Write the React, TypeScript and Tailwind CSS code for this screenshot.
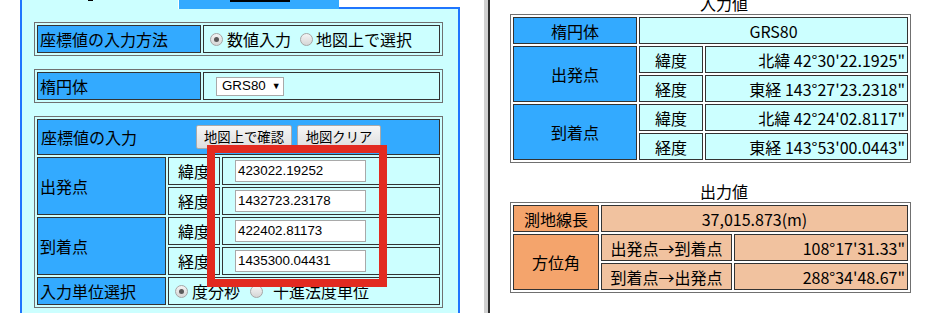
import React from "react";

function Radio({ checked = false, className = "" }: { checked?: boolean; className?: string }) {
  return (
    <span
      className={`inline-flex shrink-0 items-center justify-center w-[13px] h-[13px] rounded-full border border-[#a6a6a6] bg-gradient-to-b from-[#f4f4f4] to-[#d6d6d6] ${className}`}
    >
      {checked && <span className="block w-[5px] h-[5px] rounded-full bg-[#5a5a5a]" />}
    </span>
  );
}

const thL = "border border-[#333] bg-[#33aaff] flex items-center text-[16px] leading-[20px]";
const tdL = "border border-[#333] flex items-center text-[16px] leading-[20px]";

function Input({ value }: { value: string }) {
  return (
    <div className="w-[131px] h-[22px] bg-white border border-[#a9a9a9] flex items-center pl-[2px] font-['Liberation_Sans',sans-serif] text-[13.33px] leading-[16px]">
      {value}
    </div>
  );
}

function Btn({ label, w }: { label: string; w: string }) {
  return (
    <div
      className={`${w} h-[24px] shrink-0 flex items-center justify-center border border-[#a9a9a9] rounded-[2px] bg-gradient-to-b from-[#f6f6f6] to-[#dedede] text-[13.33px] leading-[16px]`}
    >
      {label}
    </div>
  );
}

const thR = "border border-[#333] bg-[#33aaff] flex items-center justify-center text-[16px] leading-[20px]";
const tdR = "border border-[#333] bg-[#ccffff] flex items-center text-[16px] leading-[20px]";
const thO = "border border-[#333] bg-[#f4a46c] flex items-center justify-center text-[16px] leading-[20px]";
const tdO = "border border-[#333] bg-[#f1c29f] flex items-center text-[16px] leading-[20px]";

export default function App() {
  return (
    <div className="relative flex w-[932px] h-[313px] overflow-hidden bg-white text-black font-['Noto_Sans_CJK_JP',sans-serif]">
      {/* LEFT */}
      <div className="w-[484px] shrink-0 pl-[20px]">
        <div className="w-[440px] flex flex-col">
          <div className="flex h-[9px]">
            <div className="relative w-[158px] bg-[#ccffff] border-l-2 border-[#1f75fe]">
              <div className="absolute left-[66px] top-0 w-[5px] h-[1px] bg-black" />
            </div>
            <div className="w-px bg-white" />
            <div className="relative w-[160px] bg-[#33aaff]">
              <div className="absolute left-[51px] top-0 w-[60px] h-[2px] bg-black" />
            </div>
            <div className="flex-1 border-b-2 border-[#1f75fe]" />
          </div>
          <div className="h-[304px] bg-[#ccffff] border-x-2 border-[#1f75fe] pl-[12px] pt-[13px] flex flex-col gap-[13px]">
            {/* table 1 */}
            <div className="w-[409px] border border-[#707070] p-[2px] grid grid-cols-[164px_1fr] gap-[2px]">
              <div className={`${thL} h-[28px] pl-[2px]`}>座標値の入力方法</div>
              <div className={`${tdL} h-[28px] pl-[6px]`}>
                <Radio checked />
                <span className="ml-[4px]">数値入力</span>
                <Radio className="ml-[9px]" />
                <span className="ml-[3px]">地図上で選択</span>
              </div>
            </div>
            {/* table 2 */}
            <div className="w-[409px] border border-[#707070] p-[2px] grid grid-cols-[164px_1fr] gap-[2px]">
              <div className={`${thL} h-[28px] pl-[2px]`}>楕円体</div>
              <div className={`${tdL} h-[28px] pl-[12px]`}>
                <div className="w-[68px] h-[19px] bg-white border border-[#a9a9a9] flex items-center pl-[5px] font-['Liberation_Sans',sans-serif] text-[13.33px] leading-[16px]">
                  GRS80<span className="ml-[6px] text-[9px]">▼</span>
                </div>
              </div>
            </div>
            {/* table 3 */}
            <div className="w-[409px] border border-[#707070] p-[2px] grid grid-cols-[129px_52px_1fr] grid-rows-[36px_28px_28px_28px_28px_28px] gap-[2px]">
              <div className={`${thL} col-span-3 pl-[3px]`}>
                <span className="w-[155px] shrink-0">座標値の入力</span>
                <Btn label="地図上で確認" w="w-[96px]" />
                <div className="w-[5px]" />
                <Btn label="地図クリア" w="w-[84px]" />
              </div>
              <div className={`${thL} row-span-2 pl-[2px]`}>出発点</div>
              <div className={`${tdL} justify-center`}>緯度</div>
              <div className={`${tdL} pl-[12px]`}><Input value="423022.19252" /></div>
              <div className={`${tdL} justify-center`}>経度</div>
              <div className={`${tdL} pl-[12px]`}><Input value="1432723.23178" /></div>
              <div className={`${thL} row-span-2 pl-[2px]`}>到着点</div>
              <div className={`${tdL} justify-center`}>緯度</div>
              <div className={`${tdL} pl-[12px]`}><Input value="422402.81173" /></div>
              <div className={`${tdL} justify-center`}>経度</div>
              <div className={`${tdL} pl-[12px]`}><Input value="1435300.04431" /></div>
              <div className={`${thL} pl-[2px]`}>入力単位選択</div>
              <div className={`${tdL} col-span-2 pl-[6px]`}>
                <Radio checked />
                <span className="ml-[4px]">度分秒</span>
                <Radio className="ml-[10px]" />
                <span className="ml-[10px]">十進法度単位</span>
              </div>
            </div>
          </div>
        </div>
      </div>

      {/* separator */}
      <div className="w-[4px] shrink-0 bg-[#d0d0d0]" />
      <div className="w-[2px] shrink-0 bg-[#2e2e2e]" />

      {/* RIGHT */}
      <div className="flex-1 pl-[20px] flex flex-col">
        <div className="mt-[-8px] h-[22px] leading-[22px] text-[16px] pl-[190px]">入力値</div>
        <div className="w-[401px] border border-[#707070] p-[2px] grid grid-cols-[124px_64px_1fr] grid-rows-[27px_27px_27px_27px_27px] gap-[2px]">
          <div className={thR}>楕円体</div>
          <div className={`${tdR} col-span-2 justify-center`}>GRS80</div>
          <div className={`${thR} row-span-2`}>出発点</div>
          <div className={`${tdR} justify-center`}>緯度</div>
          <div className={`${tdR} justify-end pr-[2px]`}>北緯 42°30'22.1925"</div>
          <div className={`${tdR} justify-center`}>経度</div>
          <div className={`${tdR} justify-end pr-[2px]`}>東経 143°27'23.2318"</div>
          <div className={`${thR} row-span-2`}>到着点</div>
          <div className={`${tdR} justify-center`}>緯度</div>
          <div className={`${tdR} justify-end pr-[2px]`}>北緯 42°24'02.8117"</div>
          <div className={`${tdR} justify-center`}>経度</div>
          <div className={`${tdR} justify-end pr-[2px]`}>東経 143°53'00.0443"</div>
        </div>
        <div className="mt-[17px] h-[22px] leading-[22px] text-[16px] pl-[190px]">出力値</div>
        <div className="w-[401px] border border-[#707070] p-[2px] grid grid-cols-[86px_131px_1fr] grid-rows-[27px_27px_27px] gap-[2px]">
          <div className={thO}>測地線長</div>
          <div className={`${tdO} col-span-2 justify-center`}>37,015.873(m)</div>
          <div className={`${thO} row-span-2`}>方位角</div>
          <div className={`${tdO} justify-center`}>出発点→到着点</div>
          <div className={`${tdO} justify-end pr-[2px]`}>108°17'31.33"</div>
          <div className={`${tdO} justify-center`}>到着点→出発点</div>
          <div className={`${tdO} justify-end pr-[2px]`}>288°34'48.67"</div>
        </div>
      </div>

      {/* red highlight overlay */}
      <div className="absolute left-[207px] top-[145px] w-[180px] h-[142px] border-[8px] border-[#e22a20] pointer-events-none" />
    </div>
  );
}
